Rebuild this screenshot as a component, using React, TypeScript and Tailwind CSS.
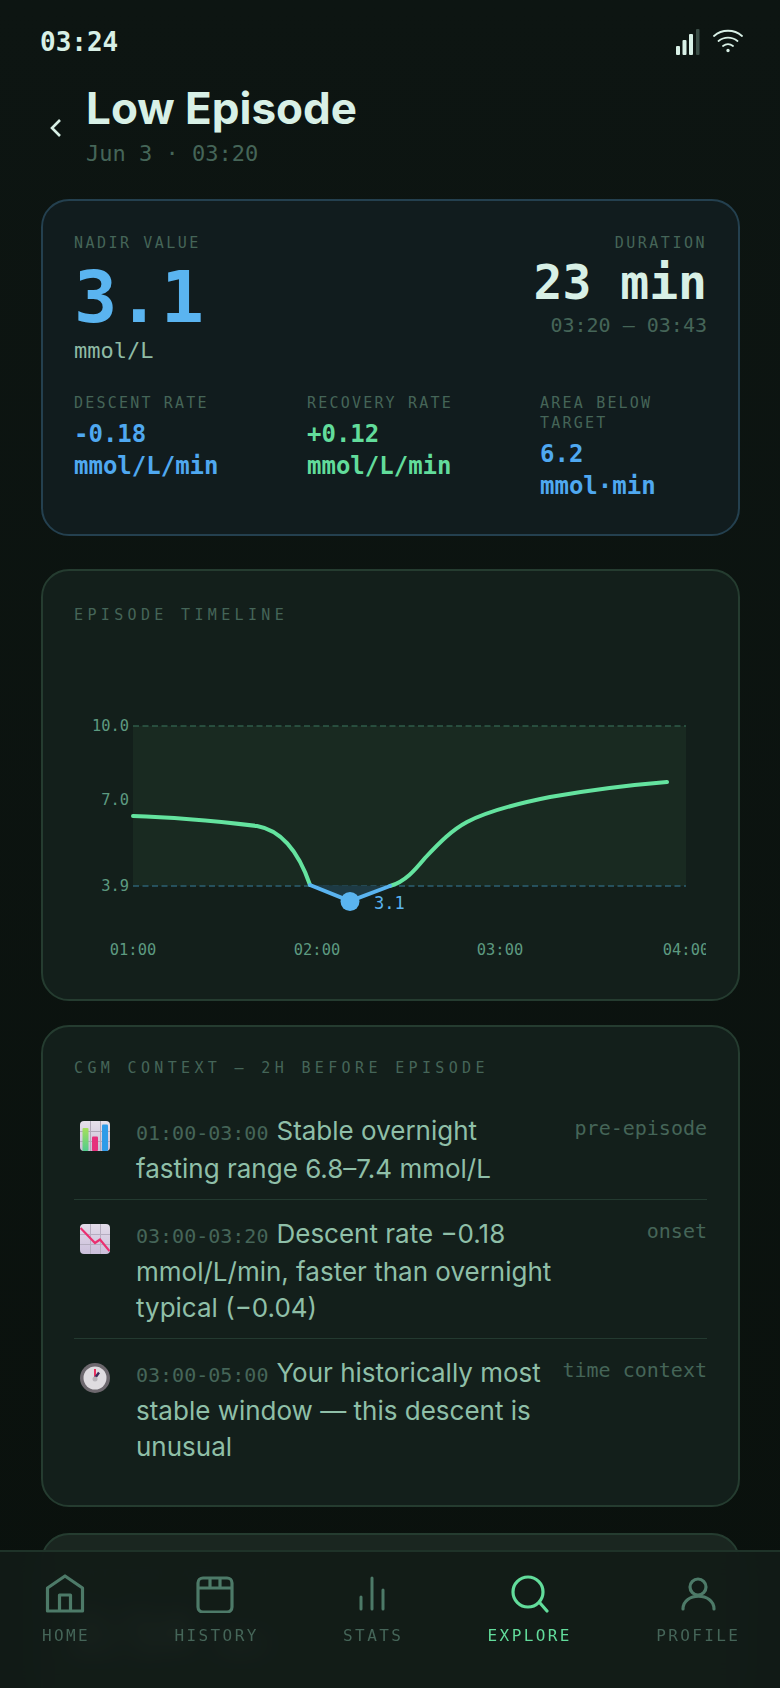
const mono = "font-['DejaVu_Sans_Mono',monospace]";

function Label({ children, wide }: { children: React.ReactNode; wide?: boolean }) {
  return <div className={`text-[15px] leading-[20px] text-[#456558] ${wide ? "tracking-[2.500px]" : "tracking-[2.200px]"}`}>{children}</div>;
}

function SectionLabel({ children }: { children: React.ReactNode }) {
  return <div className="text-[15px] leading-[20px] tracking-[4.350px] text-[#456558]">{children}</div>;
}

function Stat({ label, value, unit, color }: { label: React.ReactNode; value: string; unit: string; color: string }) {
  return (
    <div className="w-[166px]">
      <Label>{label}</Label>
      <div className={`mt-[5px] text-[24px] leading-[32px] font-semibold ${color}`}>
        <div>{value}</div>
        <div>{unit}</div>
      </div>
    </div>
  );
}

function BarEmoji() {
  return (
    <svg width="30" height="30" viewBox="0 0 30 30">
      <defs>
        <linearGradient id="pa" x1="0" y1="0" x2="0" y2="1">
          <stop offset="0" stopColor="#e6e0ea" />
          <stop offset="1" stopColor="#c9bfd6" />
        </linearGradient>
        <linearGradient id="gb" x1="0" y1="0" x2="0" y2="1">
          <stop offset="0" stopColor="#a5e05a" />
          <stop offset="1" stopColor="#52cc8e" />
        </linearGradient>
      </defs>
      <rect width="30" height="30" rx="4" fill="url(#pa)" />
      <path d="M0 10.500H30M0 20.500H30M10.500 0V30M20.500 0V30" stroke="#b0a8b8" strokeWidth="1" />
      <rect x="2.500" y="7" width="6" height="23" rx="1" fill="url(#gb)" />
      <rect x="12" y="15.500" width="6" height="14.500" rx="1" fill="#e6307c" />
      <rect x="22" y="3.500" width="6" height="26.500" rx="1" fill="#2f9be8" />
    </svg>
  );
}

function DownEmoji() {
  return (
    <svg width="30" height="30" viewBox="0 0 30 30">
      <defs>
        <linearGradient id="pa2" x1="0" y1="0" x2="0" y2="1">
          <stop offset="0" stopColor="#e2dbe8" />
          <stop offset="1" stopColor="#cbbfdb" />
        </linearGradient>
      </defs>
      <rect width="30" height="30" rx="4" fill="url(#pa2)" />
      <path d="M0 10.500H30M0 20.500H30M10.500 0V30M20.500 0V30" stroke="#b5adc0" strokeWidth="1" />
      <path d="M0.500 4L15 19L20 15.500L29.500 27" fill="none" stroke="#ea3070" strokeWidth="2.200" />
    </svg>
  );
}

function ClockEmoji() {
  return (
    <svg width="30" height="30" viewBox="0 0 30 30">
      <circle cx="15" cy="15" r="15" fill="#6d686e" />
      <circle cx="15" cy="15" r="11.500" fill="#dfdce0" />
      <path d="M15 15V6" stroke="#e8305f" strokeWidth="2" />
      <path d="M15 15L19 9.500" stroke="#3a2a5a" strokeWidth="2.400" />
      <circle cx="15" cy="16" r="2.500" fill="#b8b4ba" />
    </svg>
  );
}

function Row({ icon, time, text, tag, last }: { icon: React.ReactNode; time: string; text: string; tag: string; last?: boolean }) {
  return (
    <div className={`flex pt-[16px] ${last ? "" : "pb-[12px] border-b border-[#233a30]"}`}>
      <div className="w-[62px] shrink-0 pl-[6px] pt-[8px]">{icon}</div>
      <div className="w-[426px] shrink-0 text-[26px] leading-[36px] text-[#8fbfa8] font-['Inter',sans-serif]">
        <span className={`${mono} text-[20px] text-[#456558] mr-[8px]`}>{time}</span>
        {text}
      </div>
      <div className="ml-auto pt-[1px] shrink-0 whitespace-nowrap text-[20px] leading-[28px] text-[#456558]">{tag}</div>
    </div>
  );
}

function Chart() {
  return (
    <svg className="block -mt-[2px]" width="632" height="344" viewBox="74 623 632 344">
      <rect x="133" y="726" width="553" height="160" fill="#192a21" />
      <path d="M133 726H686" stroke="#2f5c49" strokeWidth="1.500" strokeDasharray="6 3.500" />
      <path d="M133 886H686" stroke="#2c6073" strokeWidth="1.500" strokeDasharray="6 3.500" />
      <path d="M310 885L350 901L390 886Z" fill="#1d3a44" />
      <path d="M133 816C170 817 215 821 257 826C280 830 298 850 310 885" fill="none" stroke="#64e39f" strokeWidth="4" strokeLinecap="round" />
      <path d="M390 886C405 882 415 870 425 858C440 842 452 830 467 822C490 810 520 803 550 797C590 790 630 785 667 782" fill="none" stroke="#64e39f" strokeWidth="4" strokeLinecap="round" />
      <path d="M310 885L350 901L390 886" fill="none" stroke="#5ab4f0" strokeWidth="4" strokeLinecap="round" />
      <circle cx="350" cy="901.500" r="9.500" fill="#5ab4f0" />
      <g fontSize="15.400" fill="#5d9a80" textAnchor="end">
        <text x="129" y="731">10.0</text>
        <text x="129" y="805">7.0</text>
        <text x="129" y="891">3.9</text>
      </g>
      <text x="374" y="909" fontSize="17" fill="#5ab4f0">3.1</text>
      <g fontSize="15.400" fill="#5d9a80" textAnchor="middle">
        <text x="133" y="955">01:00</text>
        <text x="317" y="955">02:00</text>
        <text x="500" y="955">03:00</text>
        <text x="686" y="955">04:00</text>
      </g>
    </svg>
  );
}

function NavItem({ icon, label, active }: { icon: React.ReactNode; label: string; active?: boolean }) {
  return (
    <div className={`flex flex-col items-center gap-[13px] ${active ? "text-[#62dc9b]" : "text-[#456558]"}`}>
      <div className={`w-[40px] h-[40px] ${active ? "" : "text-[#4d7a68]"}`}>{icon}</div>
      <div className="text-[16px] leading-[20px] tracking-[2.400px] mr-[-2.400px]">{label}</div>
    </div>
  );
}

export default function App() {
  return (
    <div className={`relative w-[780px] h-[1688px] overflow-hidden bg-linear-to-b from-[#0d1512] to-[#0a110d] ${mono}`}>
      <div className="flex items-center justify-between pl-[40px] pr-[37px] pt-[11px] h-[72px]">
        <div className="text-[26px] leading-[32px] font-bold text-[#d8f0e6]">03:24</div>
        <div className="flex items-start gap-[13px] text-[#d8f0e6]">
          <svg width="24" height="26" viewBox="0 0 24 26" fill="currentColor">
            <rect x="0" y="17" width="4" height="9" rx="1" />
            <rect x="6.500" y="11" width="4" height="15" rx="1" />
            <rect x="13" y="5" width="4" height="21" rx="1" />
            <rect x="20" y="0" width="3.500" height="26" rx="1" fill="#3a4d46" />
          </svg>
          <svg width="30" height="24" viewBox="0 0 30 24" fill="none" stroke="currentColor" strokeWidth="1.800" strokeLinecap="round">
            <path d="M1 7C9 0 21 0 29 7" />
            <path d="M5.500 12C11 7.500 19 7.500 24.500 12" />
            <path d="M10 17C13 14.800 17 14.800 20 17" />
            <circle cx="15" cy="21.500" r="0.800" fill="currentColor" />
          </svg>
        </div>
      </div>

      <div className="flex pl-[49px] mt-[12px] h-[115px]">
        <svg className="mt-[34px]" width="14" height="20" viewBox="0 0 14 20" fill="none" stroke="#d8f0e6" strokeWidth="2.600">
          <path d="M11 2L3 10L11 18" />
        </svg>
        <div className="ml-[23px]">
          <div className="text-[44px] leading-[48px] font-bold text-[#d8f0e6] font-['Inter',sans-serif]">Low Episode</div>
          <div className="mt-[8px] text-[22px] leading-[28px] text-[#456558]">Jun 3 · 03:20</div>
        </div>
      </div>

      <div className="ml-[41px] mr-[40px]">
        <div className="h-[337px] rounded-[28px] border-2 border-[#24404f] bg-[#111c1e] px-[31px] pt-[32px]">
          <div className="flex justify-between">
            <div>
              <Label wide>NADIR VALUE</Label>
              <div className="text-[72px] leading-[76px] font-semibold text-[#5ab4f0] mt-[6px]">3.1</div>
              <div className="text-[22px] leading-[30px] text-[#8fbba5] mt-[1px]">mmol/L</div>
            </div>
            <div className="text-right">
              <Label wide>DURATION</Label>
              <div className="text-[48px] leading-[52px] font-semibold text-[#d8f0e6] mt-[3px]">23 min</div>
              <div className="text-[20px] leading-[28px] text-[#456558] mt-[3px]">03:20 – 03:43</div>
            </div>
          </div>
          <div className="flex gap-[67px] mt-[27px]">
            <Stat label="DESCENT RATE" value="-0.18" unit="mmol/L/min" color="text-[#4fa8f0]" />
            <Stat label="RECOVERY RATE" value="+0.12" unit="mmol/L/min" color="text-[#62dc9b]" />
            <Stat label="AREA BELOW TARGET" value="6.2" unit="mmol·min" color="text-[#4fa8f0]" />
          </div>
        </div>

        <div className="mt-[33px] h-[432px] rounded-[28px] border-2 border-[#253c30] bg-[#131f1b] px-[31px] pt-[34px]">
          <SectionLabel>EPISODE TIMELINE</SectionLabel>
          <Chart />
        </div>

        <div className="mt-[24px] h-[482px] rounded-[28px] border-2 border-[#253c30] bg-[#131f1b] px-[31px] pt-[31px]">
          <SectionLabel>CGM CONTEXT — 2H BEFORE EPISODE</SectionLabel>
          <div className="mt-[19px]">
            <Row icon={<BarEmoji />} time="01:00-03:00" text="Stable overnight fasting range 6.8–7.4 mmol/L" tag="pre-episode" />
            <Row icon={<DownEmoji />} time="03:00-03:20" text="Descent rate −0.18 mmol/L/min, faster than overnight typical (−0.04)" tag="onset" />
            <Row icon={<ClockEmoji />} time="03:00-05:00" text="Your historically most stable window — this descent is unusual" tag="time context" last />
          </div>
        </div>

        <div className="mt-[26px] h-[300px] rounded-[28px] border-2 border-[#253c30] bg-[#1a2620] px-[31px] pt-[31px]">
          <SectionLabel>PATTERN ANALYSIS</SectionLabel>
          <div className="mt-[20px] text-[48px] leading-[52px] font-semibold text-[#d8f0e6]">2/14 <span className="text-[20px]">days</span></div>
        </div>
      </div>

      <div className="absolute left-0 right-0 bottom-0 h-[138px] border-t-2 border-[#1f3329] bg-[#121b17]/95 backdrop-blur-md flex justify-between px-[42px] pt-[21px]">
        <NavItem
          label="HOME"
          icon={
            <svg viewBox="0 0 40 40" fill="none" stroke="currentColor" strokeWidth="3.200" strokeLinejoin="round">
              <path d="M20 3L2.500 15V38H37.500V15Z" />
              <path d="M14.500 38V22H25.500V38" />
            </svg>
          }
        />
        <NavItem
          label="HISTORY"
          icon={
            <svg viewBox="0 0 40 40" fill="none" stroke="currentColor" strokeWidth="3.200">
              <rect x="3" y="5" width="34" height="34" rx="5" />
              <path d="M3 15H37M15 5V15M25 5V15" />
            </svg>
          }
        />
        <NavItem
          label="STATS"
          icon={
            <svg viewBox="0 0 40 40" fill="none" stroke="currentColor" strokeWidth="3" strokeLinecap="round">
              <path d="M9 24V36M20 5V36M31 17V36" />
            </svg>
          }
        />
        <NavItem
          active
          label="EXPLORE"
          icon={
            <svg viewBox="0 0 40 40" fill="none" stroke="currentColor" strokeWidth="3.200" strokeLinecap="round">
              <circle cx="19" cy="19" r="15" />
              <path d="M31 30L38 38" />
            </svg>
          }
        />
        <NavItem
          label="PROFILE"
          icon={
            <svg viewBox="0 0 40 40" fill="none" stroke="currentColor" strokeWidth="3.200" strokeLinecap="round">
              <circle cx="21" cy="14" r="8" />
              <path d="M6 36C6 19 37 19 37 36" />
            </svg>
          }
        />
      </div>
    </div>
  );
}
